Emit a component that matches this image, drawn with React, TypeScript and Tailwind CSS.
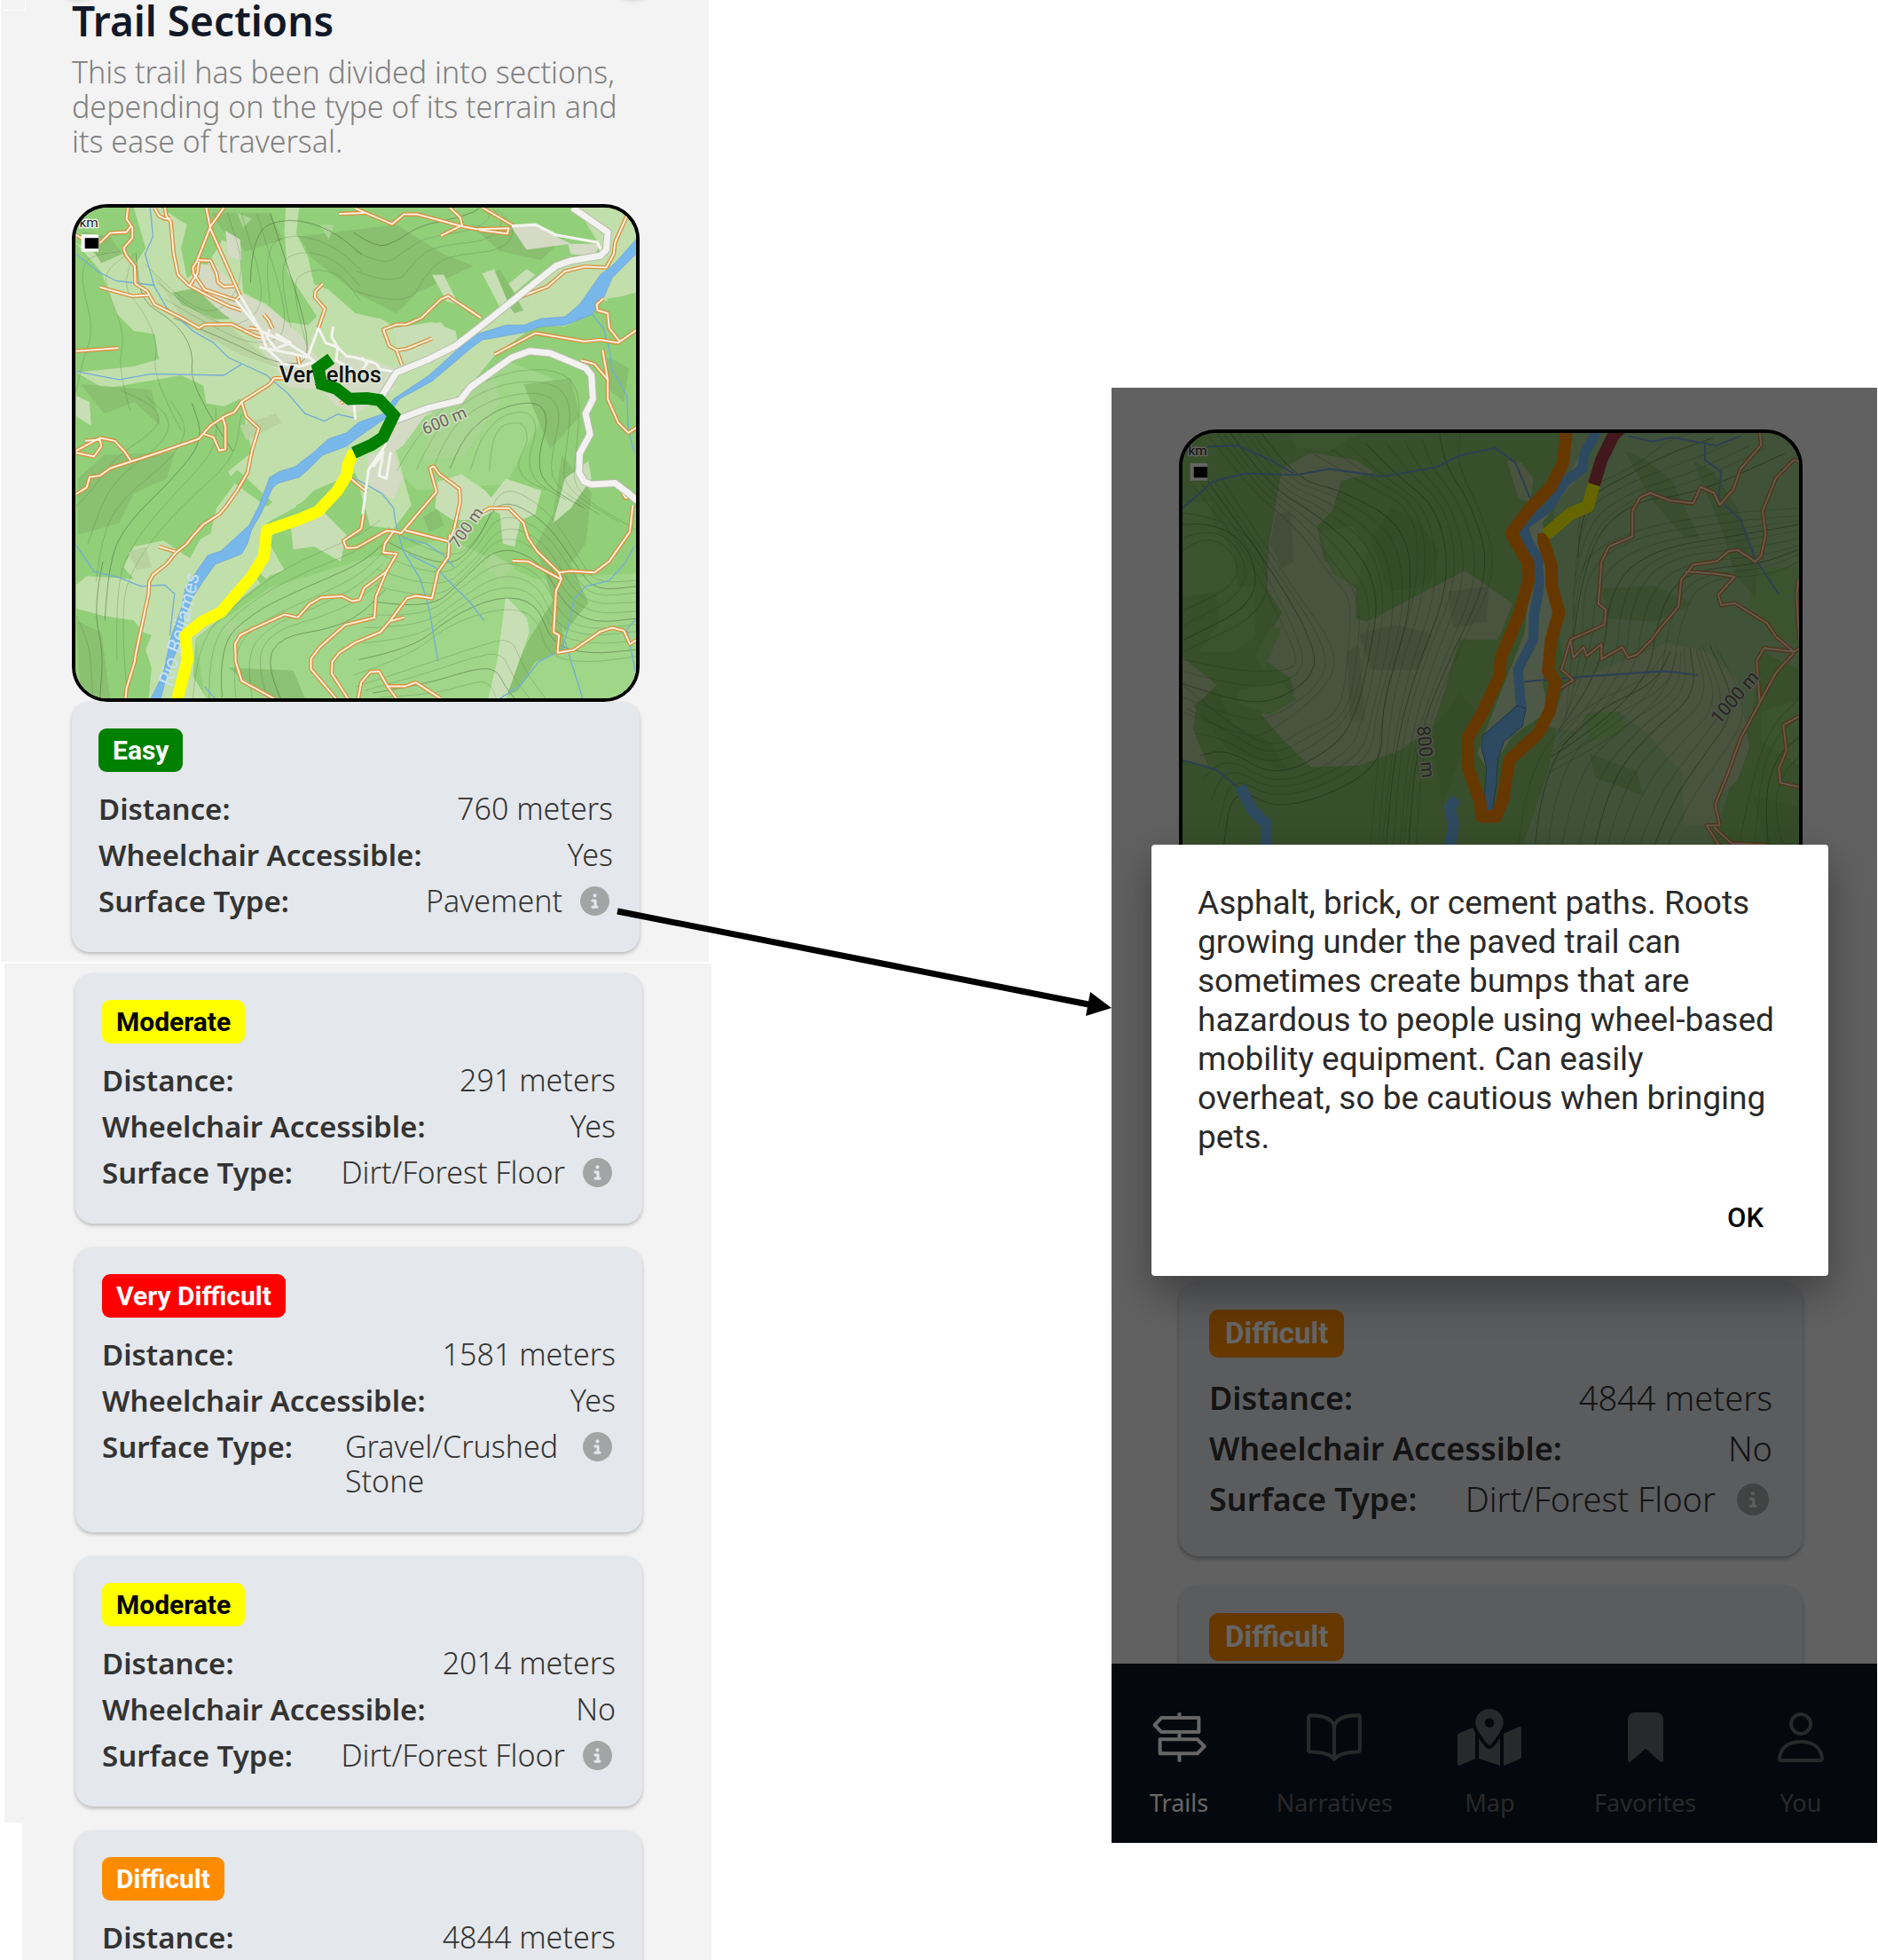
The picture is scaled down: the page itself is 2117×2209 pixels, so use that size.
import type { ReactNode } from "react";
import { FaMapMarkedAlt } from "react-icons/fa";
import { FaCircleInfo } from "react-icons/fa6";
import { IoBookOutline, IoBookmark } from "react-icons/io5";

/* ---------- map drawing helpers ---------- */

type Pt = [number, number];

/** Lines stepped evenly from one elevation line to another. */
function contours(from: Pt[], to: Pt[], count: number): string[] {
  const lines: string[] = [];
  for (let i = 0; i < count; i++) {
    const t = count === 1 ? 0 : i / (count - 1);
    const pts = from.map(([x, y], k): Pt => [
      Math.round(x + (to[k][0] - x) * t + Math.sin(i * 1.7 + k) * 5),
      Math.round(y + (to[k][1] - y) * t + Math.cos(i * 1.3 + k) * 5),
    ]);
    let d = `M${pts[0][0]} ${pts[0][1]}`;
    for (let k = 1; k < pts.length - 1; k++) {
      const mx = (pts[k][0] + pts[k + 1][0]) / 2;
      const my = (pts[k][1] + pts[k + 1][1]) / 2;
      d += `Q${pts[k][0]} ${pts[k][1]} ${mx} ${my}`;
    }
    const last = pts[pts.length - 1];
    lines.push(`${d}L${last[0]} ${last[1]}`);
  }
  return lines;
}

function Contours({ lines }: { lines: string[] }) {
  return (
    <g fill="none" stroke="#4f6a3c" strokeWidth="3">
      {lines.map((d, i) => (
        <path key={d} d={d} strokeOpacity={i % 4 === 3 ? 0.55 : 0.27} />
      ))}
    </g>
  );
}

function Lines({ paths, color, width }: { paths: string[]; color: string; width: number }) {
  return (
    <g fill="none" stroke={color} strokeWidth={width} strokeLinejoin="round">
      {paths.map((p) => (
        <polyline key={p} points={p} />
      ))}
    </g>
  );
}

function ScaleMark({ x, y }: { x: number; y: number }) {
  return (
    <g>
      <text x={x + 57} y={y + 27} textAnchor="end" fontSize="46" fontFamily="Roboto, sans-serif" fill="#222" stroke="#f5f5f5" strokeWidth="8" paintOrder="stroke">
        km
      </text>
      <rect x={x} y={y + 53} width="58" height="58" fill="#fff" />
      <rect x={x + 12} y={y + 65} width="46" height="36" fill="#000" />
    </g>
  );
}

/* ---------- village map ---------- */

const villageTracks = [
  "220,42 215,80 235,110 235,145 205,180 215,205 243,240 245,300 285,325 310,370 400,415 460,450 480,438 570,437 655,478 670,482",
  "45,135 70,150", "125,162 160,128 215,125 230,105", "125,312 235,342 290,338",
  "310,42 325,70 345,80 365,80", "345,42 350,70 365,90 375,200 390,270 425,305 500,345 560,375 605,390",
  "485,42 500,115 600,340", "545,42 500,105 455,220 440,245 442,265 480,320 585,355 600,340",
  "460,220 500,222 520,265 525,295 545,310 580,308", "430,305 455,265 460,225", "45,528 187,518",
  "880,300 855,325 853,345 887,385 865,450", "680,403 697,425 710,452", "630,450 665,455",
  "45,1012 80,990 90,955 125,950 160,925 330,870 460,825 500,780 545,750 580,735 605,700 700,640 715,620 745,620",
  "605,700 620,750 663,790 640,865 625,940 590,1000 555,1050 530,1080 475,1115 435,1160 420,1180 383,1210 350,1250 305,1285 292,1310 290,1350 245,1560 243,1580 215,1670 212,1705",
  "45,865 125,822 175,832 210,870 230,900", "75,832 125,828 130,850 105,885 45,872",
  "475,808 510,820 530,865 550,860 550,780 540,752", "325,1190 380,1207", "795,545 803,580", "940,705 955,695",
  "715,1705 605,1645 585,1580 583,1520 600,1490 640,1470 750,1420 795,1430 835,1385 875,1362 945,1358 980,1375 1005,1370 1020,1330 1095,1275",
  "1055,1430 1060,1360 1095,1275 1130,1215 1085,1210 1090,1180 1120,1138 1145,1145 1265,1005 1243,925 1255,918 1275,945 1343,995 1345,1040 1325,1130 1310,1170",
  "925,1705 840,1605 840,1570 870,1530 955,1455 1058,1430", "965,1705 910,1620 912,1580 935,1550 990,1515 1075,1480 1105,1445 1165,1365 1195,1357 1250,1365 1270,1275 1305,1225 1310,1150",
  "1105,1443 1155,1430", "960,1195 995,1193 1095,1137 1120,1138", "1160,1135 1305,1172", "975,960 1030,1005",
  "1018,1080 1010,1130 950,1170 960,1195",
  "1400,1085 1445,1060 1510,1060 1560,1110 1575,1160 1605,1205 1680,1278 1720,1273 1800,1278 1850,1240 1920,1140 1930,1050",
  "1522,1238 1575,1240 1685,1300", "1680,1278 1688,1300 1670,1340 1662,1480 1680,1490 1675,1550 1730,1540 1820,1478 1860,1465 1900,1475 1920,1520 1945,1505",
  "1000,1705 1010,1650 1040,1615 1070,1612 1100,1665 1130,1705", "1100,1663 1160,1663 1195,1650 1280,1705",
  "990,45 1115,98 1155,65 1200,65 1350,105 1400,115 1510,112 1505,130 1410,118", "1310,42 1345,75 1352,102 1280,137",
  "1420,42 1525,103", "935,63 1020,60", "1540,348 1640,310 1700,258 1765,242 1840,245 1865,200 1870,160 1910,70",
  "1415,415 1385,395 1305,342 1280,352 1215,415 1165,437 1130,438 1085,455 1105,510 1130,525 1165,520 1250,485", "1130,525 1148,575",
  "1462,540 1600,467 1765,495 1820,490 1880,500 1945,455", "1830,350 1808,370 1810,390 1845,400 1850,450 1885,495",
  "1755,560 1800,572 1845,625 1845,690 1880,770 1915,805 1945,785", "1828,525 1845,625", "1895,1008 1905,1025 1925,1022",
];

const villageStreams = [
  "295,42 305,140 278,200 310,310 350,380 440,460 510,500 560,550 690,610 760,670 820,740 885,765 930,742 990,755",
  "45,200 120,260 180,290 310,305", "45,597 190,625 300,605 545,610 605,572",
  "45,1185 105,1275 190,1295 265,1325 345,1320 378,1350 362,1490", "990,960 1080,1010 1120,1060 1125,1100 1150,1200 1210,1300 1240,1400 1270,1580",
  "1150,1160 1230,1180 1290,1220 1325,1260", "1170,1215 1260,1260 1380,1380 1425,1440",
  "1790,400 1830,450 1850,520 1860,590 1910,680 1915,800 1935,870", "1935,1190 1900,1250 1850,1305 1770,1325 1730,1370 1710,1470 1690,1540 1610,1580 1550,1660 1480,1705",
  "1700,1510 1760,1705", "1945,1430 1910,1470 1940,1620", "480,1665 515,1705",
];

const villageStreets = [
  "600,340 670,460 760,500 830,545 870,580", "585,355 670,460 690,520 750,575", "665,515 770,535 830,550", "740,570 800,580 850,565",
  "830,545 865,450 890,500 930,515 960,545 990,550 1060,570 1075,590 1130,600", "915,445 910,480 930,515 925,560 980,590", "700,455 690,480 720,520 770,500 720,470",
  "1010,550 1030,570 1015,590", "985,700 990,760", "1125,760 1090,850 1035,930 1015,1080", "1110,870 1095,960 1070,950 1085,870 1050,920",
];

const villageContours = [
  ...contours([[1130, 930], [1200, 800], [1330, 680], [1500, 600], [1680, 590], [1760, 660], [1740, 860], [1720, 1000], [1945, 1140]], [[1440, 930], [1450, 850], [1475, 800], [1500, 780], [1560, 770], [1575, 830], [1530, 900], [1560, 960], [1640, 1000]], 6),
  ...contours([[1100, 1120], [1300, 1250], [1420, 1150], [1480, 980], [1640, 1060], [1750, 1220], [1800, 1310], [1945, 1300]], [[990, 1620], [1180, 1560], [1300, 1460], [1480, 1400], [1600, 1420], [1640, 1560], [1780, 1580], [1945, 1560]], 11),
  ...contours([[990, 1660], [1180, 1600], [1400, 1530], [1520, 1500], [1560, 1600], [1640, 1705]], [[1080, 1705], [1260, 1690], [1400, 1640], [1440, 1650], [1460, 1690], [1470, 1705]], 4),
  ...contours([[440, 1705], [450, 1500], [600, 1370], [760, 1260], [1000, 1160], [1080, 1100]], [[740, 1705], [690, 1590], [740, 1500], [900, 1470], [1000, 1420], [1090, 1330]], 7),
  ...contours([[45, 1050], [100, 990], [170, 890], [330, 790], [320, 720], [200, 660]], [[215, 1705], [190, 1400], [250, 1240], [400, 1060], [580, 900], [600, 740]], 6),
  ...contours([[45, 1420], [80, 1500], [90, 1600], [100, 1705]], [[130, 1240], [100, 1400], [140, 1550], [130, 1705]], 2),
  ...contours([[45, 660], [60, 560], [100, 460], [60, 300], [80, 210], [200, 190]], [[580, 870], [430, 650], [440, 520], [370, 420], [260, 360], [250, 200]], 4),
  ...contours([[280, 230], [420, 380], [540, 400], [620, 260], [560, 60]], [[380, 420], [560, 490], [720, 570], [860, 560], [700, 60]], 4),
  ...contours([[990, 320], [1160, 380], [1230, 260], [1300, 210], [1500, 190], [1540, 110], [1470, 42]], [[990, 130], [1060, 180], [1130, 150], [1200, 100], [1320, 80], [1400, 60], [1420, 42]], 4),
  ...contours([[830, 520], [760, 300], [830, 250], [940, 270], [1010, 360]], [[640, 300], [640, 120], [760, 70], [900, 110], [1010, 200]], 4),
];

function VillageMap() {
  return (
    <svg viewBox="42 42 1899 1662" preserveAspectRatio="xMidYMid slice" className="block h-full w-full" role="img" aria-label="Map of the trail around Vergelhos">
      <rect x="0" y="0" width="1990" height="1750" fill="#91cf79" />
      <path fill="#9fd689" d="M480 1705 450 1500 700 1330 990 1240 1300 1160 1600 1300 1941 1280V1705ZM1100 900 1240 740 1380 690 1500 560 1660 620 1620 760 1500 980 1200 1000Z" />
      <path fill="#c1dfab" d="M42 160 130 260 180 400 240 460 310 470 325 555 240 580 45 600 140 655 400 610 475 645 485 705 545 715 600 690 640 870 560 935 580 980 520 1060 500 1145 465 1165 430 1230 340 1170 240 1190 205 1260 240 1300 80 1290 45 1320V1400L140 1425 240 1440 270 1480 300 1490 280 1540 300 1600 290 1710H490L440 1630 450 1500 540 1430 610 1360 700 1290 750 1270 700 1180 690 1110 800 1050 850 1000 990 940 1040 1120 1120 1130 1180 1050 1160 980 1130 870 1080 850 1150 780 1250 740 1370 690 1400 620 1460 545 1600 440 1700 445 1790 400 1830 360 1941 330V42H1740L1830 190 1700 230 1550 340 1420 440 1340 510 1280 430 1130 450 1080 420 990 400 900 320 850 300 830 210 790 130 800 42H755L750 120 760 260 860 410 830 440 760 430 690 370 610 330 600 190 540 150 480 250 420 280 400 180 420 100 330 42H240L280 180 240 240 180 180 130 210Z" />
      <g fill="#87be6e" opacity=".85">
        <path d="M500 60 700 60 745 150 620 190 540 120ZM800 140 1130 100 1290 200 1390 240 1200 330 1130 400 990 330 840 210ZM60 120 160 140 200 200 130 230ZM370 330 470 310 610 390 560 420 440 420ZM60 640 300 660 330 780 240 700 140 740ZM140 880 380 870 350 960 240 1010 190 1110 50 1150V960ZM45 1440 130 1480 160 1705H60ZM560 1600 780 1610 820 1705H700ZM1380 100 1700 140 1620 220 1480 190ZM1430 280 1480 250 1560 390 1530 400Z" />
        <path d="M1690 880 1790 1010 1770 1180 1720 1250 1780 1380 1700 1480 1650 1340 1600 1190 1660 1080ZM1560 640 1720 620 1750 750 1650 860ZM1580 1500 1680 1340 1700 1540 1600 1580 1540 1680 1480 1700ZM1830 530 1920 560 1900 700 1850 660ZM1220 1090 1270 1060 1290 1120 1240 1140Z" />
      </g>
      <g fill="#91cf79">
        <path d="M560 960 590 930 710 1040 690 1055ZM790 1050 960 960 970 1080 880 1130 790 1110ZM1840 350 1930 340 1941 430 1910 410ZM1700 460 1941 480 1941 600 1870 560 1600 500ZM640 1280 660 1275 700 1310 680 1330ZM1760 880 1850 920 1941 900V1010L1860 960 1790 960Z" />
      </g>
      <g fill="#a9d592">
        <path d="M1250 730 1460 610 1480 700 1360 880 1220 900ZM590 60 640 80 610 110ZM870 100 920 100 900 150ZM540 1440 620 1460 560 1490ZM1450 1210 1530 1260 1480 1300 1430 1260Z" />
      </g>
      <g fill="#c8dfb6">
        <path d="M1270 970 1350 945 1430 1000 1480 1060 1400 1100 1320 1100 1260 1060ZM1500 960 1620 1000 1600 1080 1550 1100 1530 1190 1490 1180 1480 1080 1430 1050ZM1700 960 1780 900 1790 960 1720 1060 1660 1110ZM1500 1360 1570 1430 1580 1480 1500 1705H1440L1470 1580ZM1120 450 1250 430 1330 460 1340 520 1280 560 1140 560ZM1510 300 1570 250 1600 270 1530 330ZM1250 270 1290 270 1340 370 1300 360ZM1420 265 1460 250 1510 370 1480 380ZM770 1110 880 1070 960 1150 940 1240 850 1190 780 1200ZM45 680 90 700 95 780 45 750Z" />
      </g>
      <g fill="#d4dac3">
        <path d="M440 230 520 240 600 330 700 380 800 470 870 560 1000 540 1130 590 1120 660 990 740 920 710 880 660 760 650 700 560 640 470 540 400 430 300ZM1520 110 1610 100 1670 140 1720 165 1570 185ZM1710 165 1820 165 1800 205 1720 200ZM1030 880 1120 870 1150 960 1120 1030 1040 990ZM1130 740 1240 730 1150 850 1080 900ZM550 120 600 150 605 220 560 210Z" />
      </g>
      <g fill="#b8d3a0">
        <path d="M300 260 400 370 560 440 700 560 780 600 600 540 420 440ZM600 780 720 740 740 770 620 830ZM220 1210 280 1190 300 1260 250 1270Z" />
      </g>
      <Contours lines={villageContours} />
      <Lines paths={villageStreams} color="#74add6" width={4} />
      <path
        fill="#78b7ea"
        stroke="#6b9fd6"
        strokeWidth="2"
        d="M295 1710 340 1620 365 1500 400 1400 415 1330 490 1220 535 1205 630 1118 665 1050 700 955 735 935 785 920 850 870 900 825 960 805 1000 770 1085 740 1120 690 1240 610 1390 475 1500 440 1560 440 1620 418 1700 412 1750 370 1820 270 1870 230 1945 145V195L1860 280 1830 350 1790 405 1700 440 1620 445 1560 465 1490 478 1420 490 1380 520 1250 630 1140 690 1100 750 1000 820 960 850 880 880 830 930 800 955 730 975 710 990 670 1080 640 1130 625 1180 605 1215 515 1250 480 1300 440 1360 410 1430 400 1500 370 1580 345 1650 330 1710Z"
      />
      <Lines paths={villageTracks} color="#d8903f" width={14} />
      <Lines paths={villageTracks} color="#fdf1dd" width={6} />
      <Lines paths={villageStreets} color="#f4f4ee" width={9} />
      <Lines paths={["1520,105 1600,100 1670,135 1810,160 1825,190"]} color="#f4f4ee" width={10} />
      <g fill="none" strokeLinejoin="round">
        {[
          "1725,42 1845,125 1840,185 1820,205 1720,222 1670,240 1420,440 1330,510 1240,555 1130,600 1080,680",
          "1120,765 1240,720 1345,695 1380,650 1520,550 1580,528 1650,535 1770,585 1790,610 1795,690 1770,740 1785,810 1750,875 1748,940 1765,970 1790,980 1870,975 1910,1005 1945,1035",
        ].map((p) => (
          <g key={p}>
            <polyline points={p} stroke="#b9bdae" strokeWidth="27" />
            <polyline points={p} stroke="#f2f2f0" strokeWidth="21" />
          </g>
        ))}
      </g>
      <g fontFamily="Roboto, sans-serif" paintOrder="stroke" strokeLinejoin="round">
        <text x="732" y="633" fontSize="77" fontWeight="500" fill="#111" stroke="#e3e9da" strokeWidth="8">
          Vergelhos
        </text>
        <text transform="translate(1226 812) rotate(-23)" fontSize="56" fill="#6b6659" stroke="#cfe0c0" strokeWidth="10">
          600 m
        </text>
        <text transform="translate(1338 1198) rotate(-55)" fontSize="54" fill="#6b6659" stroke="#d3dcc6" strokeWidth="10">
          700 m
        </text>
        <path id="river-name" d="M370 1665Q400 1540 420 1470T468 1250" fill="none" stroke="none" />
        <text fontSize="70" fontStyle="italic" fill="#c9e2f5">
          <textPath href="#river-name">Rio Beijames</textPath>
        </text>
      </g>
      <polyline points="985,868 965,915 960,950 930,1000 865,1070 800,1098 690,1135 680,1225 640,1290 535,1412 470,1445 415,1490 422,1572 384,1720" fill="none" stroke="#ff0" strokeWidth="40" strokeLinejoin="round" />
      <polyline points="908,554 864,586 876,640 925,655 970,690 1030,688 1072,694 1120,745 1084,820 1046,845 985,872" fill="none" stroke="#008000" strokeWidth="41" />
      <ScaleMark x={62} y={80} />
    </svg>
  );
}

/* ---------- valley map ---------- */

const valleyTracks = [
  "2215,165 2220,210 2150,290 2125,360 2080,410 2060,370 2015,350 1990,405 1910,395 1845,370 1810,385 1785,430 1785,515 1705,550 1680,600 1670,740 1695,760 1690,810 1575,860 1545,960 1585,995 1535,1025",
  "1575,860 1585,920 1620,885 1630,915 1680,875 1680,925 1750,885 1770,920 1800,910 1850,860 1880,820 1940,750 1950,660 1990,610 2070,598 2110,565 2140,560 2200,600 2220,580 2235,510 2225,430 2270,320 2330,260 2350,265",
  "1965,632 2070,640 2130,650 2075,710 2085,745 2130,738 2240,805 2270,850 2330,900 2350,890", "2330,900 2230,888 2205,930 2215,1070",
  "2330,905 2270,970 2210,1080 2150,1190 2110,1300 2065,1410 2080,1480 2035,1480 2080,1550", "2350,1115 2295,1145 2305,1230 2280,1290 2285,1338 2350,1352",
  "2060,1485 2120,1540 2240,1545", "2345,660 2340,710 2348,860",
];

const valleyStreams = [
  "264,420 370,330 480,305 650,310 760,290 940,315 1120,285 1200,245 1320,220 1390,270 1440,390", "350,215 450,212 560,260 640,305",
  "264,1262 380,1295 460,1360", "1420,1000 1600,985 1890,965 2005,978", "1770,180 1850,198 1920,185 2070,212 2150,180",
  "2030,210 2030,260 2085,300 2075,390 2150,460 2200,590 2280,710",
];

const valleyContours = [
  ...contours([[350, 170], [480, 350], [660, 500], [750, 640], [840, 720], [830, 900], [800, 1100], [680, 1150], [560, 1230], [400, 1130], [264, 1010]], [[530, 170], [640, 330], [800, 360], [1020, 480], [1040, 720], [1000, 900], [940, 1100], [940, 1300], [600, 1440], [430, 1340], [400, 1560]], 8),
  ...contours([[700, 230], [860, 330], [1050, 430], [1060, 700], [960, 1000], [930, 1250], [900, 1560]], [[1200, 170], [1180, 260], [1260, 400], [1340, 620], [1200, 900], [1080, 1180], [1050, 1560]], 9),
  ...contours([[264, 560], [330, 505], [440, 570], [450, 680], [264, 770]], [[264, 440], [400, 450], [540, 560], [550, 760], [264, 900]], 4),
  ...contours([[264, 920], [420, 960], [600, 970], [660, 940], [600, 800], [480, 560], [300, 340]], [[264, 1100], [460, 1180], [560, 1170], [780, 1000], [780, 880], [660, 720], [400, 330]], 5),
  ...contours([[1600, 520], [1600, 360], [1780, 290], [1900, 200], [2000, 170]], [[1580, 860], [1620, 560], [1780, 400], [2000, 380], [2300, 240]], 6),
  ...contours([[1560, 1100], [1580, 900], [1580, 620], [1760, 500], [2100, 440], [2348, 420]], [[1500, 1300], [1900, 1100], [1950, 800], [2020, 660], [2250, 650], [2348, 600]], 10),
  ...contours([[1400, 1560], [1420, 1280], [1620, 1080], [1830, 1000], [1900, 900]], [[1900, 1560], [1980, 1400], [2080, 1260], [2180, 1100], [2060, 880]], 11),
  ...contours([[2140, 1560], [2180, 1350], [2240, 1160], [2348, 1060]], [[2300, 1560], [2260, 1420], [2290, 1300], [2348, 1240]], 4),
];

function ValleyMap() {
  return (
    <svg viewBox="264 170 2084 1810" preserveAspectRatio="none" className="block h-full w-full" role="img" aria-label="Map of the trail along the valley">
      <rect x="260" y="160" width="2100" height="1830" fill="#8bc66c" />
      <path fill="#a0cd8a" d="M1560 170H2348V960L2220 900 2190 1100 2100 1400 2050 1560V1990H1260L1500 1300 1560 1000 1500 560Z" />
      <path fill="#b9cf9b" d="M600 290 700 235 850 260 910 300 800 330 770 430 720 480 740 590 850 690 850 790 890 800 1080 700 1220 630 1380 740 1330 860 1200 860 1140 1060 1110 1150 1000 1230 860 1280 700 1285 600 1190 530 1110 640 1040 630 990 545 930 545 870 600 770 550 690 555 550 575 430ZM264 920 380 1010 310 1080 300 1160 350 1280 264 1260ZM1560 1010 1900 870 2040 900 2140 990 2180 1220 2140 1330 2060 1400 2080 1480 1960 1480 1950 1300 1900 1250 1840 1180 1740 1100 1640 1100 1600 1170 1500 1150Z" />
      <path fill="#c3dcae" d="M1640 180 1590 330 1480 470 1500 560 1520 860 1480 1000 1500 1100 1380 1180 1300 1300 1260 1240 1330 1060 1420 840 1440 600 1410 520 1560 330Z" />
      <path fill="#b9cf9b" d="M1360 260 1410 270 1450 320 1440 400 1400 390Z" />
      <g fill="#93d073">
        <path d="M264 400 360 400 370 480 440 570 450 680 510 680 510 850 440 900 320 900 390 800 380 700 264 720ZM560 820 600 820 540 960 510 910ZM450 1030 600 1000 650 1060 560 1110 450 1070ZM730 500 840 480 890 560 850 680 770 640ZM630 170H860L760 230 650 220ZM2200 620H2348V880L2280 850 2180 740ZM2220 1100 2348 1060V1280L2220 1200ZM1620 1110 1740 1100 1760 1170 1640 1200Z" />
      </g>
      <g fill="#7fb462" opacity=".5">
        <path d="M900 520 970 420 1060 460 1130 560 1100 680 960 700ZM1110 1160 1200 1040 1260 1100 1140 1420ZM300 1080 380 1020 430 1140 560 1200 620 1300 420 1230ZM1760 230 1830 260 1920 330 2010 520 1960 520 1840 380ZM1990 260 2060 300 2140 420 2210 600 2200 720 2130 640 2090 500ZM1680 690 1860 680 1990 740 1860 800 1700 790ZM1640 1240 1800 1300 1820 1380 1660 1320ZM2190 1380 2348 1420V1560H2240Z" />
      </g>
      <g fill="#9db487" opacity=".5">
        <path d="M580 440 630 430 640 600 600 620 560 540ZM860 840 980 810 1110 840 1060 960 900 960ZM820 900 860 880 880 1130 830 1130ZM1160 700 1300 680 1290 800 1180 820Z" />
      </g>
      <Contours lines={valleyContours} />
      <Lines paths={valleyStreams} color="#6f9fd0" width={6} />
      <Lines paths={["460,1350 500,1430 548,1475 548,1600", "1190,1390 1168,1420 1180,1480 1160,1600"]} color="#70b9ef" width={38} />
      <Lines paths={["1665,165 1622,240 1615,290 1560,330 1500,420 1415,480 1430,530 1465,590 1470,680 1452,780 1450,860 1398,960 1405,1050 1410,1090"]} color="#70b9ef" width={34} />
      <path fill="#70b9ef" stroke="#5689b5" strokeWidth="3" d="M1395 1080 1425 1090 1412 1150 1350 1200 1330 1260 1325 1340 1310 1440H1280L1292 1290 1275 1220 1280 1180Z" />
      <Lines paths={valleyTracks} color="#cb7f3c" width={14} />
      <Lines paths={valleyTracks} color="#f6dcc2" width={6} />
      <g fill="none" strokeWidth="42" strokeLinejoin="round">
        <polyline stroke="#ff8c00" points="1562,160 1550,270 1510,350 1440,420 1375,505 1432,605 1435,660 1400,780 1340,920 1336,980 1275,1110 1227,1190 1230,1290 1270,1400 1275,1450 1325,1450 1345,1400 1370,1260 1465,1175 1505,1100 1525,1000 1500,965 1510,860 1537,770 1512,680 1510,610 1485,535 1484,505" />
        <polyline stroke="#ff0" points="1492,510 1575,440 1635,415 1655,340" />
        <polyline stroke="#a33c44" points="1655,342 1680,260 1722,175 1750,150" />
      </g>
      <g fontFamily="Roboto, sans-serif" fontSize="62" fill="#5d5b52" stroke="#c2cfb4" strokeWidth="10" paintOrder="stroke">
        <text transform="translate(1056 1150) rotate(84)">800 m</text>
        <text transform="translate(2078 1145) rotate(-49)">1000 m</text>
      </g>
      <ScaleMark x={290} y={218} />
    </svg>
  );
}

/* ---------- section cards ---------- */

type Level = "Easy" | "Moderate" | "Difficult" | "Very Difficult";

const levelStyle: Record<Level, string> = {
  Easy: "bg-[#008000] text-white",
  Moderate: "bg-[#ffff00] text-black",
  Difficult: "bg-[#ff8c00] text-white",
  "Very Difficult": "bg-[#ff0000] text-white",
};

interface SectionInfo {
  level: Level;
  distance: string;
  accessible: string;
  surface: string;
}

function SectionCard({ level, distance, accessible, surface, large = false }: SectionInfo & { large?: boolean }) {
  const row = large ? "flex justify-between leading-[43px]" : "flex justify-between leading-[39px]";
  const term = large ? "text-[36px] font-semibold" : "text-[33px] font-semibold";
  const value = large ? "text-[38px] font-light" : "text-[34px] font-light";
  const twoLine = surface.length > 17;
  return (
    <article
      className={
        large
          ? "rounded-[22px] bg-[#e4e7eb] px-[34px] pt-8 pb-[43px] text-[#333] shadow-[0_3px_5px_rgba(0,0,0,0.3)]"
          : "rounded-[20px] bg-[#e4e7eb] px-[30px] pt-[30px] pb-[38px] text-[#333] shadow-[0_2px_4px_rgba(0,0,0,0.25)]"
      }
    >
      <span
        className={`inline-block align-top font-[Roboto,sans-serif] font-bold ${
          large ? "rounded-[10px] px-[18px] text-[33px] leading-[54px]" : "rounded-[9px] px-4 text-[30px] leading-[49px]"
        } ${levelStyle[level]}`}
      >
        {level}
      </span>
      <dl className={large ? "mt-6 flex flex-col gap-[14px]" : "mt-[22px] flex flex-col gap-[13px]"}>
        <div className={row}>
          <dt className={term}>Distance:</dt>
          <dd className={value}>{distance}</dd>
        </div>
        <div className={row}>
          <dt className={term}>Wheelchair Accessible:</dt>
          <dd className={value}>{accessible}</dd>
        </div>
        <div className={row}>
          <dt className={term}>Surface Type:</dt>
          <dd className={`flex items-start ${value}`}>
            <span className={twoLine ? "w-[248px]" : "whitespace-nowrap"}>{surface}</span>
            <button type="button" aria-label={`About ${surface}`} className={large ? "mr-1 ml-6 flex h-[43px] items-center text-[#a3a5a5]" : "mr-1 ml-5 flex h-[39px] items-center text-[#a3a5a5]"}>
              <FaCircleInfo className={large ? "size-9" : "size-[33px]"} />
            </button>
          </dd>
        </div>
      </dl>
    </article>
  );
}

/* ---------- bottom navigation ---------- */

function TrailsIcon() {
  return (
    <svg viewBox="20 44 196 192" className="h-16 w-[65px]" fill="none" stroke="currentColor" strokeWidth="12" strokeLinejoin="round" aria-hidden="true">
      <path d="M57 74H184V122H57L34 98ZM52 147H179L203 171 179 195H52ZM118 56V74M118 122V147M118 195V224" />
    </svg>
  );
}

function PersonIcon() {
  return (
    <svg viewBox="0 0 64 64" className="size-16" fill="none" stroke="currentColor" strokeWidth="4" strokeLinejoin="round" aria-hidden="true">
      <circle cx="32" cy="17" r="11" />
      <path d="M10 58C8.500 58 8 57 8 55.500C9.500 44 18 37 32 37S54.500 44 56 55.500C56 57 55.500 58 54 58Z" />
    </svg>
  );
}

const tabs: { label: string; icon: ReactNode; active?: boolean }[] = [
  { label: "Trails", icon: <TrailsIcon />, active: true },
  { label: "Narratives", icon: <IoBookOutline className="size-[66px]" /> },
  { label: "Map", icon: <FaMapMarkedAlt className="h-16 w-[72px]" /> },
  { label: "Favorites", icon: <IoBookmark className="size-16" /> },
  { label: "You", icon: <PersonIcon /> },
];

/* ---------- page ---------- */

export default function App() {
  return (
    <main className="relative grid h-screen grid-cols-[802fr_451fr_864fr] items-start overflow-hidden bg-white font-['Noto_Sans',sans-serif]">
      <div>
        <section className="relative mr-[3px] ml-px bg-[#f3f3f3] pr-[78px] pb-[11px] pl-20">
          <div className="absolute top-0 left-1 h-3 w-6 border-r border-b border-white" />
          <div className="absolute -top-[54px] left-[62px] size-12 rounded-full shadow-[0_3px_8px_rgba(0,0,0,0.4)]" />
          <div className="absolute -top-[54px] right-[62px] size-12 rounded-full shadow-[0_3px_8px_rgba(0,0,0,0.4)]" />
          <h1 className="text-[46px] leading-[46px] font-semibold text-[#111827]">Trail Sections</h1>
          <p className="mt-4 text-[34px] leading-[39px] font-light text-[#808080]">
            This trail has been divided into sections, depending on the type of its terrain and its ease of traversal.
          </p>
          <div className="mt-[51px] h-[561px] overflow-hidden rounded-[40px] border-4 border-black">
            <VillageMap />
          </div>
          <SectionCard level="Easy" distance="760 meters" accessible="Yes" surface="Pavement" />
        </section>

        <section className="mt-0.5 ml-[5px] flex flex-col gap-[27px] bg-[#f3f3f3] pt-[11px] pr-[78px] pb-[18px] pl-20">
          <SectionCard level="Moderate" distance="291 meters" accessible="Yes" surface="Dirt/Forest Floor" />
          <SectionCard level="Very Difficult" distance="1581 meters" accessible="Yes" surface="Gravel/Crushed Stone" />
          <SectionCard level="Moderate" distance="2014 meters" accessible="No" surface="Dirt/Forest Floor" />
        </section>

        <section className="ml-[25px] bg-[#f3f3f3] pt-[9px] pr-[78px] pb-6 pl-[60px]">
          <SectionCard level="Difficult" distance="4844 meters" accessible="No" surface="Dirt/Forest Floor" />
        </section>
      </div>

      <div />

      <section className="relative mt-[437px] mr-px bg-[#f3f3f3]">
        <div className="h-[1438px] overflow-hidden pt-[47px] pr-[84px] pl-[76px]">
          <div className="h-[619px] overflow-hidden rounded-[42px] border-4 border-black">
            <ValleyMap />
          </div>
          <div className="mt-[341px] flex flex-col gap-8">
            <SectionCard large level="Difficult" distance="4844 meters" accessible="No" surface="Dirt/Forest Floor" />
            <SectionCard large level="Difficult" distance="4844 meters" accessible="No" surface="Dirt/Forest Floor" />
          </div>
        </div>
        <nav className="grid h-[202px] grid-cols-5 gap-x-[23px] bg-[#0e141e] pt-[51px] pr-[10px]">
          {tabs.map((tab) => (
            <a key={tab.label} href={`#${tab.label.toLowerCase()}`} className={`flex flex-col items-center ${tab.active ? "text-white" : "text-[#65676c]"}`}>
              <span className="flex h-16 items-center">{tab.icon}</span>
              <span className="mt-6 text-[27px] leading-9">{tab.label}</span>
            </a>
          ))}
        </nav>

        <div className="absolute inset-0 overflow-hidden bg-black/60 pt-[515px] pr-[55px] pl-[45px]">
          <div role="dialog" aria-modal="true" aria-labelledby="surface-note" className="rounded bg-white pt-11 pr-[58px] pb-[47px] pl-[52px] font-[Roboto,sans-serif] shadow-[0_20px_48px_rgba(0,0,0,0.35)]">
            <p id="surface-note" className="text-[37px] leading-[44px] text-[#2a2a2a]">
              Asphalt, brick, or cement paths. Roots growing under the paved trail can sometimes create bumps that are hazardous to people using wheel-based mobility equipment. Can easily overheat, so be cautious when bringing pets.
            </p>
            <div className="mt-[51px] flex justify-end pr-[15px]">
              <button type="button" className="text-[31px] leading-9 font-medium text-black">
                OK
              </button>
            </div>
          </div>
        </div>
      </section>

      <svg viewBox="0 0 560 130" className="pointer-events-none absolute top-[1020px] left-[695px] h-[130px] w-[560px]" aria-hidden="true">
        <path d="M1 7 532 112" stroke="#000" strokeWidth="7" />
        <path d="M558 116 534 98 529 125Z" fill="#000" />
      </svg>
    </main>
  );
}
